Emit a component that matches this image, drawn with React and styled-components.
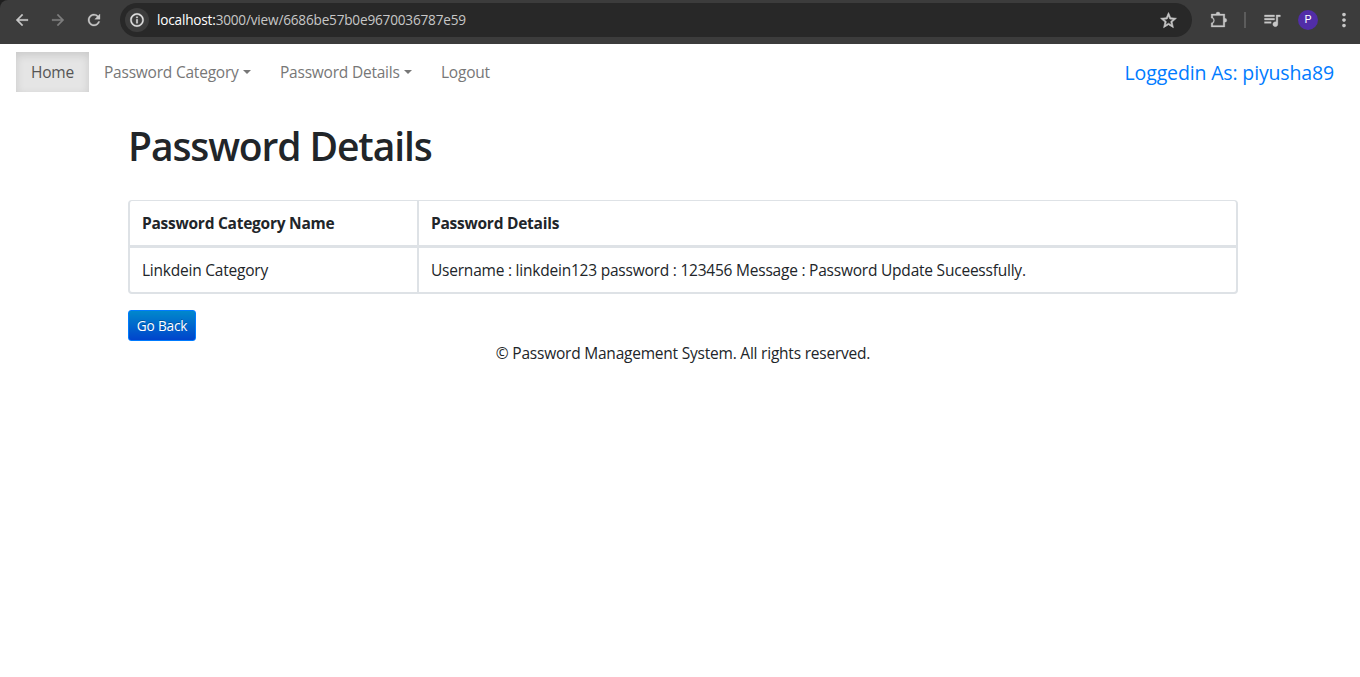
import React from "react";
import styled, { createGlobalStyle } from "styled-components";
import { MdArrowBack, MdArrowForward, MdRefresh, MdInfoOutline, MdStarBorder, MdQueueMusic, MdMoreVert } from "react-icons/md";

const GlobalStyle = createGlobalStyle`
  *, *::before, *::after { box-sizing: border-box; }
  body {
    margin: 0;
    background: #fff;
    color: #212529;
    font-family: "Open Sans", "Noto Sans", sans-serif;
    font-size: 15.5px;
    font-weight: 400;
    letter-spacing: -0.22px;
    line-height: 24px;
    overflow: hidden;
  }
`;

const Toolbar = styled.div`
  display: flex;
  align-items: center;
  height: 44px;
  padding: 0 7px 4px 13px;
  background: #3c3c3c;
  border-top-left-radius: 8px;
`;
const ToolbarBackdrop = styled.div`
  background: #1f1f1f;
`;
const IconSlot = styled.span`
  display: flex;
  flex: none;
  justify-content: center;
  width: 18px;
  margin-right: ${(p) => p.$gap || 0}px;
  color: ${(p) => p.$color || "#c7c7c7"};

  svg {
    flex: none;
    stroke: none;
  }
  path:not([fill="none"]) {
    stroke: currentColor;
    stroke-width: ${(p) => p.$stroke ?? 0.4}px;
  }
`;
const AddressBar = styled.div`
  display: flex;
  align-items: center;
  flex: 0 0 1072px;
  height: 34px;
  margin-right: 18px;
  padding: 0 15px 0 5px;
  border-radius: 17px;
  background: #282828;
`;
const SiteInfo = styled.span`
  display: flex;
  align-items: center;
  justify-content: center;
  width: 24px;
  height: 24px;
  margin-right: 8px;
  border-radius: 50%;
  background: #3c3c3c;
  color: #e3e3e3;

  svg {
    stroke: none;
  }
  path:not([fill="none"]) {
    stroke: currentColor;
    stroke-width: 0.5px;
  }
`;
const Url = styled.span`
  flex: 1;
  color: #c7c7c7;
  font-size: 13.6px;
  letter-spacing: -0.19px;
  white-space: nowrap;
`;
const Host = styled.span`
  color: #fff;
`;
const Separator = styled.span`
  flex: none;
  width: 2px;
  height: 16px;
  margin-right: 17px;
  background: #5c5c5c;
`;
const Avatar = styled.span`
  flex: none;
  width: 20px;
  height: 20px;
  margin-right: 17px;
  border-radius: 50%;
  background: #512da8;
  color: #fff;
  font: 11px/20px Roboto, sans-serif;
  letter-spacing: 0;
  text-align: center;
`;

const Nav = styled.nav`
  display: flex;
  align-items: center;
  height: 56px;
  padding: 0 26px 0 16px;
`;
const NavLink = styled.a`
  display: flex;
  align-items: center;
  height: 40px;
  width: ${(p) => p.$width}px;
  padding: 0 0 0 15px;
  white-space: nowrap;
  color: ${(p) => (p.$active ? "#555" : "#777")};
  background: ${(p) => (p.$active ? "#e5e5e5" : "transparent")};
  box-shadow: ${(p) => (p.$active ? "inset 0 3px 8px rgba(0, 0, 0, 0.125)" : "none")};
`;
const Caret = styled.span`
  margin-left: 4px;
  border: 4.8px solid transparent;
  border-top-color: currentColor;
  border-bottom: 0;
`;
const User = styled.span`
  margin-left: auto;
  padding-top: 2px;
  color: #007bff;
  font-size: 19.5px;
  letter-spacing: -0.15px;
`;

const Container = styled.main`
  width: 1110px;
  margin: 0 auto 0 128px;
  padding-top: 22px;
`;
const Title = styled.h1`
  margin: 0 0 30px;
  font-size: 39px;
  font-weight: 600;
  letter-spacing: -1.1px;
  line-height: 48px;
`;
const Table = styled.table`
  width: 100%;
  height: 94px;
  margin-bottom: 16px;
  table-layout: fixed;
  border: 2px solid #dee2e6;
  border-top-width: 1px;
  border-collapse: separate;
  border-spacing: 0;
  border-radius: 4px;
`;
const Row = styled.tr`
  height: ${(p) => p.$height}px;
`;
const HeaderCell = styled.th`
  width: ${(p) => p.$width || "auto"};
  padding: 0 12px;
  border-bottom: 3px solid #dee2e6;
  border-right: ${(p) => (p.$divided ? "2px solid #dee2e6" : "0")};
  font-weight: 700;
  letter-spacing: -0.25px;
  text-align: left;
  white-space: nowrap;
`;
const Cell = styled.td`
  padding: 0 12px;
  border-right: ${(p) => (p.$divided ? "2px solid #dee2e6" : "0")};
  white-space: nowrap;
`;
const BackButton = styled.button`
  display: block;
  width: 68px;
  height: 31px;
  padding: 0;
  border: 1px solid #007bff;
  border-radius: 3px;
  background: linear-gradient(to bottom, #0088cc, #0044cc);
  color: #fff;
  font-family: inherit;
  font-size: 13.6px;
  letter-spacing: -0.15px;
  text-shadow: 0 -1px 0 rgba(0, 0, 0, 0.25);
`;
const Footer = styled.footer`
  width: 1110px;
  margin-left: 128px;
  text-align: center;
`;

function PuzzleIcon() {
  return (
    <svg width="18" height="20" viewBox="0 0 18 20" strokeLinejoin="round">
      <path
        fillRule="evenodd"
        d="M1.2 4H6a2 2 0 0 1 4 0H14.8V8.3a2 2 0 0 1 0 4V17H1.2V12.9A2.4 2.4 0 0 0 1.2 8.1ZM2.8 5.6V7.3A4 4 0 0 1 2.8 13.7V15.4H13.2V5.6Z"
        fill="currentColor"
      />
    </svg>
  );
}

export default function App() {
  return (
    <>
      <GlobalStyle />
      <ToolbarBackdrop>
        <Toolbar>
          <IconSlot $gap={18}><MdArrowBack size={18} /></IconSlot>
          <IconSlot $gap={18} $color="#7d7d7d"><MdArrowForward size={18} /></IconSlot>
          <IconSlot $gap={17}><MdRefresh size={18} /></IconSlot>
          <AddressBar>
            <SiteInfo><MdInfoOutline size={16} /></SiteInfo>
            <Url><Host>localhost:</Host>3000/view/6686be57b0e9670036787e59</Url>
            <IconSlot $stroke={0.8}><MdStarBorder size={19} /></IconSlot>
          </AddressBar>
          <IconSlot $gap={16} $stroke={0.3}><PuzzleIcon /></IconSlot>
          <Separator />
          <IconSlot $gap={17}><MdQueueMusic size={20} /></IconSlot>
          <Avatar>P</Avatar>
          <IconSlot $stroke={0}><MdMoreVert size={22} /></IconSlot>
        </Toolbar>
      </ToolbarBackdrop>
      <Nav>
        <NavLink $active $width={73}>Home</NavLink>
        <NavLink $width={176}>Password Category<Caret /></NavLink>
        <NavLink $width={161}>Password Details<Caret /></NavLink>
        <NavLink $width={80}>Logout</NavLink>
        <User>Loggedin As: piyusha89</User>
      </Nav>
      <Container>
        <Title>Password Details</Title>
        <Table>
          <thead>
            <Row $height={47}>
              <HeaderCell $divided $width="289px">Password Category Name</HeaderCell>
              <HeaderCell>Password Details</HeaderCell>
            </Row>
          </thead>
          <tbody>
            <Row $height={44}>
              <Cell $divided>Linkdein Category</Cell>
              <Cell>Username : linkdein123 password : 123456 Message : Password Update Suceessfully.</Cell>
            </Row>
          </tbody>
        </Table>
        <BackButton>Go Back</BackButton>
      </Container>
      <Footer>© Password Management System. All rights reserved.</Footer>
    </>
  );
}
